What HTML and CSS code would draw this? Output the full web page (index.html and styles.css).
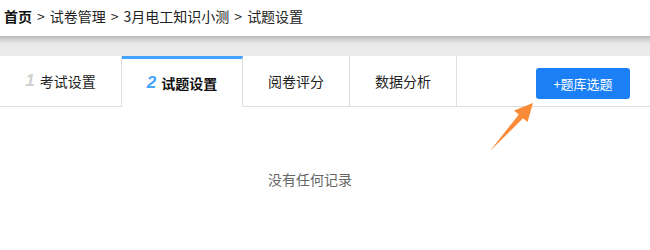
FILE: index.html
```html
<!DOCTYPE html>
<html lang="zh-CN">
<head>
<meta charset="utf-8">
<title>试题设置</title>
<link rel="stylesheet" href="styles.css">
</head>
<body>
<div class="page">
  <div class="header">
    <span class="crumb-home">首页</span><span class="sep">&gt;</span><span>试卷管理</span><span class="sep">&gt;</span><span>3月电工知识小测</span><span class="sep">&gt;</span><span>试题设置</span>
  </div>
  <div class="band"></div>
  <div class="tabs">
    <div class="tab tab-wide"><span class="num">1</span>考试设置</div>
    <div class="tab tab-wide active"><span class="num">2</span>试题设置</div>
    <div class="tab">阅卷评分</div>
    <div class="tab">数据分析</div>
    <div class="tab-rest"><button class="btn">+题库选题</button></div>
  </div>
  <div class="empty">没有任何记录</div>
  <svg class="arrow" width="50" height="55" viewBox="0 0 50 55">
    <polygon points="47,3 41.5,22 37,18.3 4,51 32.8,14.5 28,10.5" fill="#f98a37"/>
  </svg>
</div>
</body>
</html>
```
FILE: styles.css
```css
html, body {
  margin: 0;
  padding: 0;
  background: #fff;
}
.page {
  position: relative;
  width: 650px;
  height: 250px;
  font-family: "Noto Sans CJK SC", "Noto Sans", sans-serif;
  font-size: 14px;
  color: #222;
}
.header {
  height: 36px;
  line-height: 32px;
  padding-left: 4px;
  color: #222;
}
.crumb-home {
  font-weight: bold;
  color: #111;
}
.sep {
  margin: 0 5px;
}
.band {
  height: 20px;
  background: linear-gradient(to bottom, #b9b9b9 0px, #d6d6d6 4px, #e6e6e6 7px, #ebebeb 9px, #ebebeb 20px);
}
.tabs {
  display: flex;
  height: 51px;
}
.tab {
  box-sizing: border-box;
  width: 107px;
  height: 51px;
  border-right: 1px solid #dedede;
  border-bottom: 1px solid #dedede;
  display: flex;
  align-items: center;
  justify-content: center;
  background: #fff;
  color: #222;
}
.tab-wide {
  width: 122px;
}
.tab.active {
  width: 121px;
  border-top: 3px solid #44a3fd;
  border-bottom-color: #fff;
  border-left: none;
  font-weight: bold;
  color: #111;
}
.num {
  font-family: "Liberation Sans", Arial, sans-serif;
  font-style: italic;
  font-weight: bold;
  font-size: 17px;
  color: #cfcfcf;
  margin-right: 5px;
}
.active .num {
  color: #44a3fd;
}
.tab-rest {
  flex: 1;
  box-sizing: border-box;
  height: 51px;
  border-bottom: 1px solid #dedede;
  display: flex;
  justify-content: flex-end;
  align-items: flex-start;
}
.btn {
  margin-top: 12px;
  margin-right: 20px;
  width: 94px;
  height: 31px;
  border: none;
  border-radius: 3px;
  background: #1b7ff6;
  color: #fff;
  font-family: "Noto Sans CJK SC", "Noto Sans", sans-serif;
  font-size: 13px;
  padding: 0;
}
.empty {
  padding-top: 62px;
  line-height: 20px;
  text-align: center;
  color: #666;
  margin-left: -30px;
}
.arrow {
  position: absolute;
  left: 486px;
  top: 100px;
}
```
